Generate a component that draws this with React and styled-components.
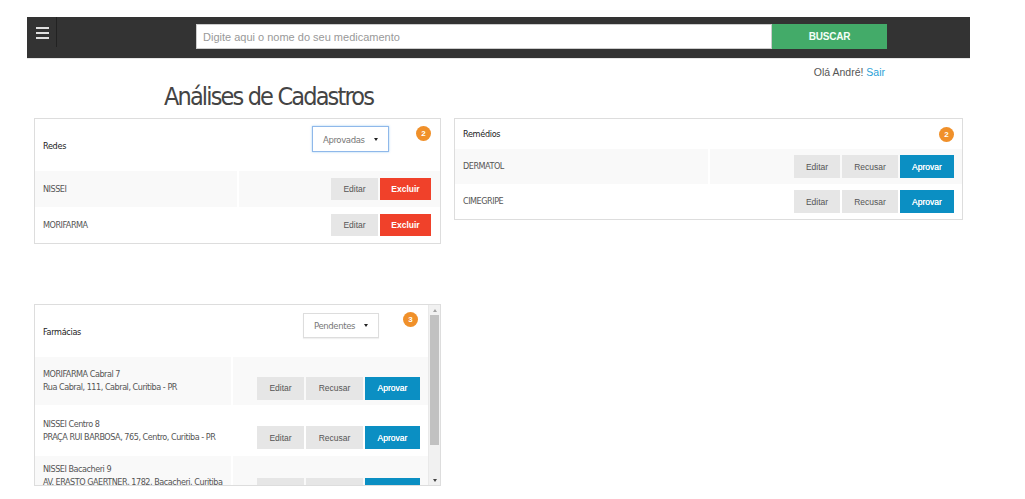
import React from 'react';
import styled, { createGlobalStyle } from 'styled-components';

const NARROW = `"Liberation Sans Narrow", "DejaVu Sans Condensed", sans-serif`;
const ARIAL = `"Liberation Sans", Arial, sans-serif`;

const GlobalStyle = createGlobalStyle`
  body {
    margin: 0;
    background: #fff;
    font-family: ${ARIAL};
    color: #333;
  }
`;

const Page = styled.div`
  width: 943px;
  padding: 17px 0 0 27px;
`;

const NavBar = styled.div`
  display: flex;
  align-items: flex-start;
  height: 41px;
  background: #333;
  border-bottom: 1px solid #e6e6e6;
`;

const MenuButton = styled.div`
  width: 30px;
  height: 30px;
  border-right: 1px solid #222;
  display: flex;
  flex-direction: column;
  align-items: center;
  padding: 10px 0 0 1px;
  gap: 3px;
  box-sizing: border-box;
  span {
    display: block;
    width: 13px;
    height: 2px;
    background: #e0e0e0;
  }
`;

const SearchInput = styled.input`
  margin: 7px 0 0 139px;
  width: 576px;
  height: 25px;
  box-sizing: border-box;
  border: 1px solid #ccc;
  padding: 0 6px;
  font-family: ${ARIAL};
  font-size: 11px;
  outline: none;
  &::placeholder {
    color: #999;
  }
`;

const SearchButton = styled.button`
  margin-top: 7px;
  width: 115px;
  height: 25px;
  border: none;
  background: #43ab69;
  color: #f4fff7;
  font-family: ${ARIAL};
  font-size: 10px;
  font-weight: bold;
  letter-spacing: -0.2px;
`;

const Greeting = styled.div`
  text-align: right;
  padding: 7px 85px 0 0;
  font-size: 10.5px;
  color: #555;
  a {
    color: #2a9fd6;
    text-decoration: none;
  }
`;

const Title = styled.h1`
  margin: 3px 0 0 137px;
  font-family: ${NARROW};
  font-weight: normal;
  font-size: 25px;
  letter-spacing: -1.85px;
  line-height: 32px;
  color: #444;
`;

const Columns = styled.div`
  display: flex;
  align-items: flex-start;
  gap: 13px;
  padding: 5px 0 0 7px;
`;

const LeftColumn = styled.div`
  width: 407px;
  display: flex;
  flex-direction: column;
  gap: 60px;
`;

const Panel = styled.div`
  width: ${p => p.$width}px;
  box-sizing: border-box;
  border: 1px solid #ddd;
  background: #fff;
`;

const ScrollFrame = styled.div`
  display: flex;
  width: 407px;
  height: 182px;
  box-sizing: border-box;
  border: 1px solid #ddd;
  overflow: hidden;
`;

const ScrollContent = styled.div`
  flex: 1;
  min-width: 0;
  overflow: hidden;
`;

const ScrollTrack = styled.div`
  width: 12px;
  flex-shrink: 0;
  display: flex;
  flex-direction: column;
  align-items: center;
  background: #f1f1f1;
  border-left: 1px solid #e9e9e9;
  box-sizing: border-box;
`;

const ScrollArrow = styled.span`
  height: 10px;
  display: flex;
  align-items: center;
  justify-content: center;
  &::after {
    content: '';
    border-left: 2.5px solid transparent;
    border-right: 2.5px solid transparent;
    ${p => (p.$down
      ? 'border-top: 3px solid #444;'
      : 'border-bottom: 3px solid #a3a3a3;')}
  }
`;

const ScrollThumb = styled.span`
  width: 9px;
  height: 130px;
  background: #c1c1c1;
`;

const ScrollSpacer = styled.span`
  flex: 1;
`;

const PanelHeader = styled.div`
  display: flex;
  align-items: ${p => (p.$tall ? 'flex-start' : 'center')};
  height: ${p => (p.$tall ? 52 : 30)}px;
  box-sizing: border-box;
  padding: ${p => (p.$tall ? `7px ${p.$right}px 0 8px` : `0 ${p.$right}px 0 8px`)};
`;

const PanelTitle = styled.div`
  flex: 1;
  align-self: center;
  font-family: ${NARROW};
  font-size: 9px;
  letter-spacing: -0.3px;
  color: #222;
  margin-top: ${p => (p.$tall ? -6 : 0)}px;
`;

const Dropdown = styled.div`
  display: flex;
  align-items: center;
  justify-content: space-between;
  width: ${p => p.$width}px;
  height: ${p => p.$height}px;
  box-sizing: border-box;
  margin-top: ${p => p.$top || 0}px;
  margin-right: ${p => p.$gap}px;
  padding: 0 10px;
  font-family: ${NARROW};
  font-size: 9.5px;
  letter-spacing: -0.4px;
  color: #777;
  background: #fff;
  border: 1px solid ${p => (p.$focus ? '#8fb8ea' : '#ddd')};
  box-shadow: ${p => (p.$focus ? '0 0 2px rgba(102,175,233,0.6)' : '0 1px 1px rgba(0,0,0,0.06)')};
`;

const Caret = styled.span`
  width: 0;
  height: 0;
  border-left: 2.5px solid transparent;
  border-right: 2.5px solid transparent;
  border-top: 3px solid #222;
`;

const Badge = styled.span`
  width: 15px;
  height: 15px;
  border-radius: 50%;
  background: #f0902a;
  color: #fff;
  font-size: 8px;
  font-weight: bold;
  display: flex;
  align-items: center;
  justify-content: center;
`;

const Row = styled.div`
  display: grid;
  grid-template-columns: minmax(0, 1fr) minmax(0, 1fr);
  column-gap: 2px;
  min-height: ${p => p.$height}px;
  background: ${p => (p.$striped ? '#f9f9f9' : '#fff')};
`;

const NameCell = styled.div`
  display: flex;
  flex-direction: column;
  justify-content: center;
  padding: ${p => (p.$multi ? '6px 8px' : '0 8px')};
  font-family: ${NARROW};
  font-size: 9px;
  letter-spacing: -0.47px;
  line-height: 13px;
  color: #555;
  border-right: 2px solid #fff;
  margin-right: -2px;
`;

const ActionCell = styled.div`
  display: flex;
  justify-content: flex-end;
  align-items: center;
  gap: 2px;
  padding: ${p => (p.$offset ? `14px ${p.$right}px 0 0` : `0 ${p.$right}px 0 0`)};
`;

const COLORS = {
  default: { bg: '#e6e6e6', fg: '#555', weight: 'normal' },
  danger: { bg: '#f0412a', fg: '#fff', weight: 'bold' },
  primary: { bg: '#0b8fc3', fg: '#fff', weight: 'normal' },
};

const ActionButton = styled.button`
  height: ${p => p.$height}px;
  width: ${p => p.$width}px;
  flex-shrink: 0;
  border: none;
  padding: 0;
  font-family: ${ARIAL};
  font-size: 8.5px;
  background: ${p => COLORS[p.$kind].bg};
  color: ${p => COLORS[p.$kind].fg};
  font-weight: ${p => COLORS[p.$kind].weight};
  text-shadow: ${p => (p.$kind === 'primary' ? '0 0 0.4px #fff' : 'none')};
`;

const redes = ['NISSEI', 'MORIFARMA'];
const remedios = ['DERMATOL', 'CIMEGRIPE'];
const farmacias = [
  ['MORIFARMA Cabral 7', 'Rua Cabral, 111, Cabral, Curitiba - PR', 48],
  ['NISSEI Centro 8', 'PRAÇA RUI BARBOSA, 765, Centro, Curitiba - PR', 51],
  ['NISSEI Bacacheri 9', 'AV. ERASTO GAERTNER, 1782, Bacacheri, Curitiba - PR', 52],
];

const App = () => (
  <Page>
    <GlobalStyle />
    <NavBar>
      <MenuButton>
        <span />
        <span />
        <span />
      </MenuButton>
      <SearchInput placeholder="Digite aqui o nome do seu medicamento" />
      <SearchButton>BUSCAR</SearchButton>
    </NavBar>
    <Greeting>
      Olá André! <a href="#sair">Sair</a>
    </Greeting>
    <Title>Análises de Cadastros</Title>
    <Columns>
      <LeftColumn>
        <Panel $width={407}>
          <PanelHeader $tall $right={9}>
            <PanelTitle $tall>Redes</PanelTitle>
            <Dropdown $width={77} $height={26} $gap={27} $focus>
              Aprovadas
              <Caret />
            </Dropdown>
            <Badge>2</Badge>
          </PanelHeader>
          {redes.map((name, i) => (
            <Row key={name} $striped={i % 2 === 0} $height={36}>
              <NameCell>{name}</NameCell>
              <ActionCell $right={9}>
                <ActionButton $kind="default" $width={47} $height={22}>Editar</ActionButton>
                <ActionButton $kind="danger" $width={51} $height={22}>Excluir</ActionButton>
              </ActionCell>
            </Row>
          ))}
        </Panel>
        <ScrollFrame>
          <ScrollContent>
            <PanelHeader $tall $right={10}>
              <PanelTitle $tall>Farmácias</PanelTitle>
              <Dropdown $width={76} $height={25} $gap={24} $top={1}>
                Pendentes
                <Caret />
              </Dropdown>
              <Badge>3</Badge>
            </PanelHeader>
            {farmacias.map(([name, address, h], i) => (
              <Row key={name} $striped={i % 2 === 0} $height={h}>
                <NameCell $multi>
                  <span>{name}</span>
                  <span>{address}</span>
                </NameCell>
                <ActionCell $offset $right={8}>
                  <ActionButton $kind="default" $width={47} $height={23}>Editar</ActionButton>
                  <ActionButton $kind="default" $width={57} $height={23}>Recusar</ActionButton>
                  <ActionButton $kind="primary" $width={55} $height={23}>Aprovar</ActionButton>
                </ActionCell>
              </Row>
            ))}
          </ScrollContent>
          <ScrollTrack>
            <ScrollArrow />
            <ScrollThumb />
            <ScrollSpacer />
            <ScrollArrow $down />
          </ScrollTrack>
        </ScrollFrame>
      </LeftColumn>
      <Panel $width={509}>
        <PanelHeader $right={8}>
          <PanelTitle>Remédios</PanelTitle>
          <Badge>2</Badge>
        </PanelHeader>
        {remedios.map((name, i) => (
          <Row key={name} $striped={i % 2 === 0} $height={35}>
            <NameCell>{name}</NameCell>
            <ActionCell $right={8}>
              <ActionButton $kind="default" $width={46} $height={23}>Editar</ActionButton>
              <ActionButton $kind="default" $width={56} $height={23}>Recusar</ActionButton>
              <ActionButton $kind="primary" $width={54} $height={23}>Aprovar</ActionButton>
            </ActionCell>
          </Row>
        ))}
      </Panel>
    </Columns>
  </Page>
);

export default App;
